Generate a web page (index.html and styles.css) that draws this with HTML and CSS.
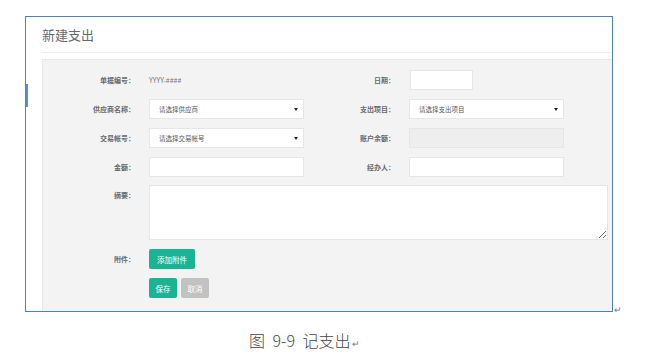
FILE: index.html
```html
<!DOCTYPE html>
<html lang="zh-CN">
<head>
  <meta charset="UTF-8">
  <meta name="viewport" content="width=device-width, initial-scale=1">
  <title>新建支出</title>
  <link rel="stylesheet" href="styles.css">
</head>
<body>

<div class="doc">
  <div class="frame">
    <div class="cursor-mark"></div>

    <!-- header -->
    <div class="modal-head">
      <h4>新建支出</h4>
    </div>

    <!-- form panel -->
    <div class="panel">
      <div class="row">
        <label class="label">单据编号：</label>
        <div class="field static">YYYY-####</div>
        <label class="label label-right">日期：</label>
        <div class="input date"></div>
      </div>

      <div class="row">
        <label class="label">供应商名称：</label>
        <div class="input select"><span>请选择供应商</span><span class="caret"></span></div>
        <label class="label label-right">支出项目：</label>
        <div class="input select"><span>请选择支出项目</span><span class="caret"></span></div>
      </div>

      <div class="row">
        <label class="label">交易帐号：</label>
        <div class="input select"><span>请选择交易帐号</span><span class="caret"></span></div>
        <label class="label label-right">账户余额：</label>
        <div class="input disabled"></div>
      </div>

      <div class="row">
        <label class="label">金额：</label>
        <div class="input"></div>
        <label class="label label-right">经办人：</label>
        <div class="input"></div>
      </div>

      <div class="row">
        <label class="label">摘要：</label>
        <textarea class="memo"></textarea>
      </div>

      <div class="row">
        <label class="label">附件：</label>
        <button class="btn btn-primary">添加附件</button>
      </div>

      <div class="row">
        <div class="label"></div>
        <div class="actions">
          <button class="btn btn-primary btn-sm">保存</button>
          <button class="btn btn-muted btn-sm">取消</button>
        </div>
      </div>
    </div>
  </div>
  <span class="ret">↵</span>
</div>

<p class="caption">图 9-9 记支出<span class="ret">↵</span></p>

</body>
</html>
```

FILE: styles.css
```css
body {
  margin: 0;
  background: #fff;
  font-family: "Noto Sans CJK SC", "Noto Sans", sans-serif;
  color: #676a6c;
}

/* document frame */
.doc {
  display: flex;
  align-items: flex-end;
  padding: 16px 0 0 25px;
}

.frame {
  position: relative;
  box-sizing: border-box;
  width: 588px;
  height: 296px;
  border: 1px solid #4f81bd;
  padding-left: 16px;
  display: flex;
  flex-direction: column;
}

.cursor-mark {
  position: absolute;
  left: 0;
  top: 67px;
  width: 2px;
  height: 23px;
  background: #5b8fd3;
}

.ret {
  font-size: 9px;
  font-weight: normal;
  color: #777;
  line-height: 1;
  margin-left: 1px;
  margin-bottom: -2px;
}

/* header */
.modal-head {
  height: 35px;
  border-bottom: 1px solid #eeeeee;
}

.modal-head h4 {
  margin: 0;
  font-size: 13px;
  font-weight: normal;
  line-height: 35px;
  color: #676a6c;
}

/* panel */
.panel {
  flex: 1;
  margin-top: 6px;
  background: #f3f3f4;
  border-left: 1px solid #e7eaec;
  border-top: 1px solid #e7eaec;
  padding-top: 10px;
}

.row {
  display: flex;
  align-items: flex-start;
  margin-bottom: 9px;
}

.row:nth-child(5) {
  margin-top: -1px;
}

.label {
  box-sizing: border-box;
  width: 106px;
  padding-right: 14px;
  text-align: right;
  font-size: 7px;
  font-weight: bold;
  line-height: 20px;
  color: #676a6c;
}

.label-right {
  width: 105px;
}

.field {
  width: 155px;
  height: 20px;
  line-height: 20px;
  font-size: 7px;
}

.static {
  color: #777;
}

.input {
  box-sizing: border-box;
  width: 155px;
  height: 20px;
  background: #fff;
  border: 1px solid #e5e6e7;
}

.date {
  width: 63px;
  margin-left: 1px;
}

.disabled {
  background: #eeeeee;
}

.select {
  display: flex;
  justify-content: space-between;
  align-items: center;
  padding: 0 5px 0 9px;
  font-size: 6.5px;
  color: #555;
}

.caret {
  width: 0;
  height: 0;
  border-left: 2px solid transparent;
  border-right: 2px solid transparent;
  border-top: 3px solid #222;
}

.memo {
  box-sizing: border-box;
  width: 459px;
  height: 55px;
  margin: 0;
  border: 1px solid #e5e6e7;
  background: #fff;
  resize: vertical;
}

/* buttons */
.actions {
  display: flex;
  gap: 4px;
}

.btn {
  height: 20px;
  padding: 0 8px;
  border: none;
  border-radius: 2px;
  font-family: inherit;
  font-size: 7.5px;
  color: #fff;
  cursor: pointer;
}

.btn-sm {
  padding: 0 6px;
  width: 28px;
}

.btn-primary {
  background: #1ab394;
}

.btn-muted {
  background: #c2c2c2;
}

/* caption */
.caption {
  margin: 16px 0 0;
  padding-left: 249px;
  font-size: 16px;
  font-weight: 300;
  color: #444;
  word-spacing: 4px;
}
```
